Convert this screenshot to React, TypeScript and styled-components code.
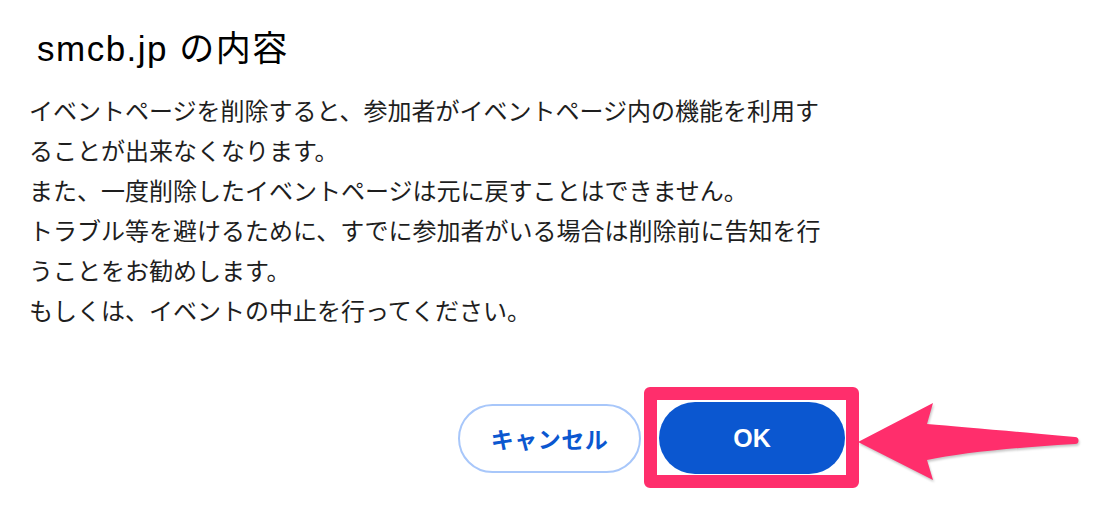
import React from "react";
import styled, { createGlobalStyle } from "styled-components";

const GlobalStyle = createGlobalStyle`
  html, body { margin: 0; padding: 0; background: #ffffff; }
  body { font-family: "Noto Sans CJK JP", "Liberation Sans", sans-serif; }
`;

const Page = styled.div`
  position: relative;
  width: 1120px;
  height: 506px;
  overflow: hidden;
  background: #ffffff;
`;

const Dialog = styled.div`
  width: 816px;
  padding: 29px 0 0 29px;
  display: flex;
  flex-direction: column;
`;

const Title = styled.h1`
  margin: 0 0 0 8px;
  font-family: "Liberation Sans", "Noto Sans CJK JP", sans-serif;
  font-weight: 400;
  font-size: 35px;
  line-height: 40px;
  letter-spacing: 1.5px;
  color: #000000;
  white-space: nowrap;
`;

const Message = styled.div`
  margin-top: 21px;
  font-family: "Noto Sans CJK JP", sans-serif;
  font-size: 24px;
  line-height: 40px;
  color: #1e1e1e;
`;

const Line = styled.div`
  white-space: nowrap;
  height: 40px;
`;

const ButtonRow = styled.div`
  margin-top: 72px;
  display: flex;
  justify-content: flex-end;
  align-items: center;
  gap: 18px;
`;

const BaseButton = styled.button`
  display: flex;
  align-items: center;
  justify-content: center;
  box-sizing: border-box;
  border-radius: 999px;
  font-weight: 700;
  cursor: pointer;
  padding: 0;
`;

const CancelButton = styled(BaseButton)`
  width: 183px;
  height: 69px;
  background: #ffffff;
  border: 2px solid #a8c7fa;
  color: #0b57d0;
  font-family: "Noto Sans CJK JP", sans-serif;
  font-size: 23px;
  letter-spacing: 0.5px;
`;

const OkButton = styled(BaseButton)`
  width: 186px;
  height: 72px;
  background: #0b57d0;
  border: none;
  color: #ffffff;
  font-family: "Liberation Sans", "Noto Sans CJK JP", sans-serif;
  font-size: 25px;
`;

const Highlighted = styled.div`
  position: relative;
  display: flex;
`;

const HighlightBox = styled.div`
  position: absolute;
  top: -15px;
  left: -15px;
  right: -14px;
  bottom: -14px;
  border: 13px solid #ff2e6c;
  border-radius: 6px;
  pointer-events: none;
`;

const Arrow = styled.svg`
  position: absolute;
  left: 850px;
  top: 395px;
  width: 240px;
  height: 100px;
  overflow: visible;
  filter: drop-shadow(1px 2px 1px rgba(0, 0, 0, 0.22));
`;

const lines = [
  "イベントページを削除すると、参加者がイベントページ内の機能を利用す",
  "ることが出来なくなります。",
  "また、一度削除したイベントページは元に戻すことはできません。",
  "トラブル等を避けるために、すでに参加者がいる場合は削除前に告知を行",
  "うことをお勧めします。",
  "もしくは、イベントの中止を行ってください。",
];

export default function App() {
  return (
    <>
      <GlobalStyle />
      <Page>
        <Dialog>
          <Title>smcb.jp の内容</Title>
          <Message>
            {lines.map((l, i) => (
              <Line key={i}>{l}</Line>
            ))}
          </Message>
          <ButtonRow>
            <CancelButton>キャンセル</CancelButton>
            <Highlighted>
              <OkButton>OK</OkButton>
              <HighlightBox />
            </Highlighted>
          </ButtonRow>
        </Dialog>
        <Arrow viewBox="850 395 240 100">
          <path
            d="M858,442 L933,403 L927,424 Q975,428 1075,437 A3.5,3.5 0 0 1 1075,444 Q975,450 927,460 L933,480 Z"
            fill="#ff2e6c"
          />
        </Arrow>
      </Page>
    </>
  );
}
